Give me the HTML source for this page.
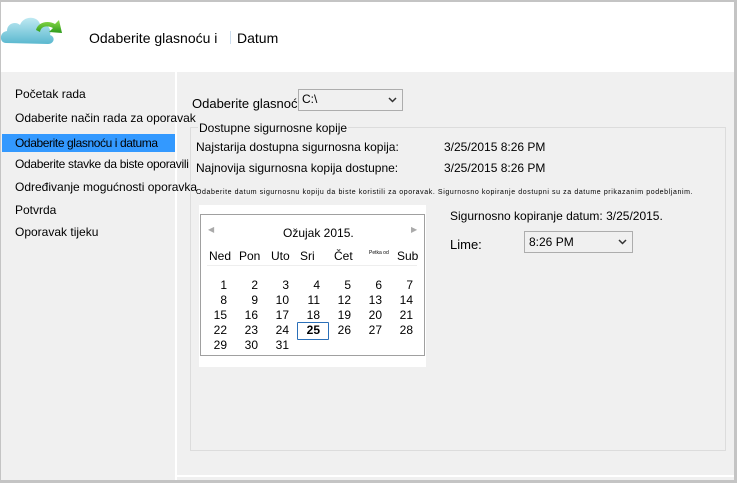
<!DOCTYPE html>
<html><head><style>
*{margin:0;padding:0;box-sizing:border-box}
body{width:737px;height:483px;position:relative;overflow:hidden;background:#c4c4c4;font-family:"Liberation Sans",sans-serif;font-size:12px;color:#000}
.a{position:absolute}
</style></head><body>
<div class="a" style="left:1px;top:2px;width:733px;height:478px;background:#f0f0f0"></div>
<div class="a" style="left:1px;top:2px;width:733px;height:70px;background:#fff"></div>
<svg class="a" style="left:0;top:10px" width="68" height="36" viewBox="0 0 68 36">
<defs><linearGradient id="c" x1="0" y1="0" x2="0" y2="1"><stop offset="0" stop-color="#bfe9f2"/><stop offset="1" stop-color="#5ab8cf"/></linearGradient>
<linearGradient id="g" x1="0" y1="0" x2="0" y2="1"><stop offset="0" stop-color="#8fdc4a"/><stop offset="1" stop-color="#2c9a1a"/></linearGradient></defs>
<path d="M6 33 C-1 33 -1 22 7 21 C7 13 16 11 20 15 C23 6 37 5 40 14 C47 13 52 19 50 25 C56 27 54 34 48 34 Z" fill="url(#c)"/>
<path d="M36 20 C38 12 48 10 55 14 L59 10 L62 23 L49 22 L53 18 C47 15 41 16 40 22 Z" fill="url(#g)"/>
</svg>
<div class="a" style="left:89px;top:30px;font-size:14px">Odaberite glasnoću i</div>
<div class="a" style="left:230px;top:31px;width:1px;height:13px;background:#cde"></div>
<div class="a" style="left:237px;top:30px;font-size:14px">Datum</div>
<div class="a" style="left:175px;top:72px;width:2px;height:408px;background:#fff"></div>
<div class="a" style="left:177px;top:475px;width:557px;height:2px;background:#fff"></div>
<div class="a" style="left:15px;top:87px">Početak rada</div>
<div class="a" style="left:15px;top:111px">Odaberite način rada za oporavak</div>
<div class="a" style="left:2px;top:134px;width:173px;height:18px;background:#3399ff"></div>
<div class="a" style="left:15px;top:136px;letter-spacing:-0.4px">Odaberite glasnoću i datuma</div>
<div class="a" style="left:15px;top:157px;letter-spacing:-0.3px">Odaberite stavke da biste oporavili</div>
<div class="a" style="left:15px;top:180px">Određivanje mogućnosti oporavka</div>
<div class="a" style="left:15px;top:203px">Potvrda</div>
<div class="a" style="left:15px;top:225px">Oporavak tijeku</div>
<div class="a" style="left:192px;top:96px;font-size:13px">Odaberite glasnoće</div>
<div class="a" style="left:298px;top:89px;width:105px;height:22px;border:1px solid #adadad;background:#f0f0f0;padding:2px 3px">C:\<svg style="position:absolute;right:5px;top:7px" width="9" height="6"><path d="M1 1 L4.5 4.5 L8 1" fill="none" stroke="#333" stroke-width="1.5"/></svg></div>
<div class="a" style="left:190px;top:127px;width:536px;height:324px;border:1px solid #dcdcdc"></div>
<div class="a" style="left:198px;top:121px;background:#f0f0f0;padding:0 1px">Dostupne sigurnosne kopije</div>
<div class="a" style="left:196px;top:140px">Najstarija dostupna sigurnosna kopija:</div>
<div class="a" style="left:444px;top:140px">3/25/2015 8:26 PM</div>
<div class="a" style="left:196px;top:161px">Najnovija sigurnosna kopija dostupne:</div>
<div class="a" style="left:444px;top:161px">3/25/2015 8:26 PM</div>
<div class="a" style="left:196px;top:189px;font-size:7px;letter-spacing:0.6px;white-space:nowrap">Odaberite datum sigurnosnu kopiju da biste koristili za oporavak. Sigurnosno kopiranje dostupni su za datume prikazanim podebljanim.</div>
<div class="a" style="left:199px;top:205px;width:227px;height:162px;background:#fff"></div>
<div class="a" style="left:200px;top:214px;width:225px;height:142px;border:1px solid #a0a0a0;background:#fff"></div>
<div class="a" style="left:208px;top:225px;color:#aaa;font-size:8px">&#9664;</div>
<div class="a" style="left:411px;top:225px;color:#aaa;font-size:8px">&#9654;</div>
<div class="a" style="left:283px;top:226px">Ožujak 2015.</div>
<div class="a" style="left:209px;top:249px">Ned</div><div class="a" style="left:239px;top:249px">Pon</div><div class="a" style="left:271px;top:249px">Uto</div><div class="a" style="left:300px;top:249px">Sri</div><div class="a" style="left:334px;top:249px">Čet</div><div class="a" style="left:369px;top:250px;font-size:5px">Petka od</div><div class="a" style="left:397px;top:249px">Sub</div>
<div class="a" style="left:207px;top:265px;width:210px;height:1px;background:#eee"></div>
<div class="a" style="left:196px;top:278px;width:220px;line-height:15px">
<div style="display:grid;grid-template-columns:repeat(7,31px);text-align:right">
<span>1</span><span>2</span><span>3</span><span>4</span><span>5</span><span>6</span><span>7</span>
<span>8</span><span>9</span><span>10</span><span>11</span><span>12</span><span>13</span><span>14</span>
<span>15</span><span>16</span><span>17</span><span>18</span><span>19</span><span>20</span><span>21</span>
<span>22</span><span>23</span><span>24</span><span style="font-weight:bold">25</span><span>26</span><span>27</span><span>28</span>
<span>29</span><span>30</span><span>31</span></div></div>
<div class="a" style="left:297px;top:322px;width:32px;height:18px;border:1px solid #2a6fb8;border-radius:1px"></div>
<div class="a" style="left:450px;top:209px">Sigurnosno kopiranje datum: 3/25/2015.</div>
<div class="a" style="left:450px;top:237px;font-size:13px">Lime:</div>
<div class="a" style="left:524px;top:231px;width:109px;height:22px;border:1px solid #adadad;background:#f0f0f0;padding:3px 4px">8:26 PM<svg style="position:absolute;right:5px;top:7px" width="9" height="6"><path d="M1 1 L4.5 4.5 L8 1" fill="none" stroke="#333" stroke-width="1.5"/></svg></div>
</body></html>
